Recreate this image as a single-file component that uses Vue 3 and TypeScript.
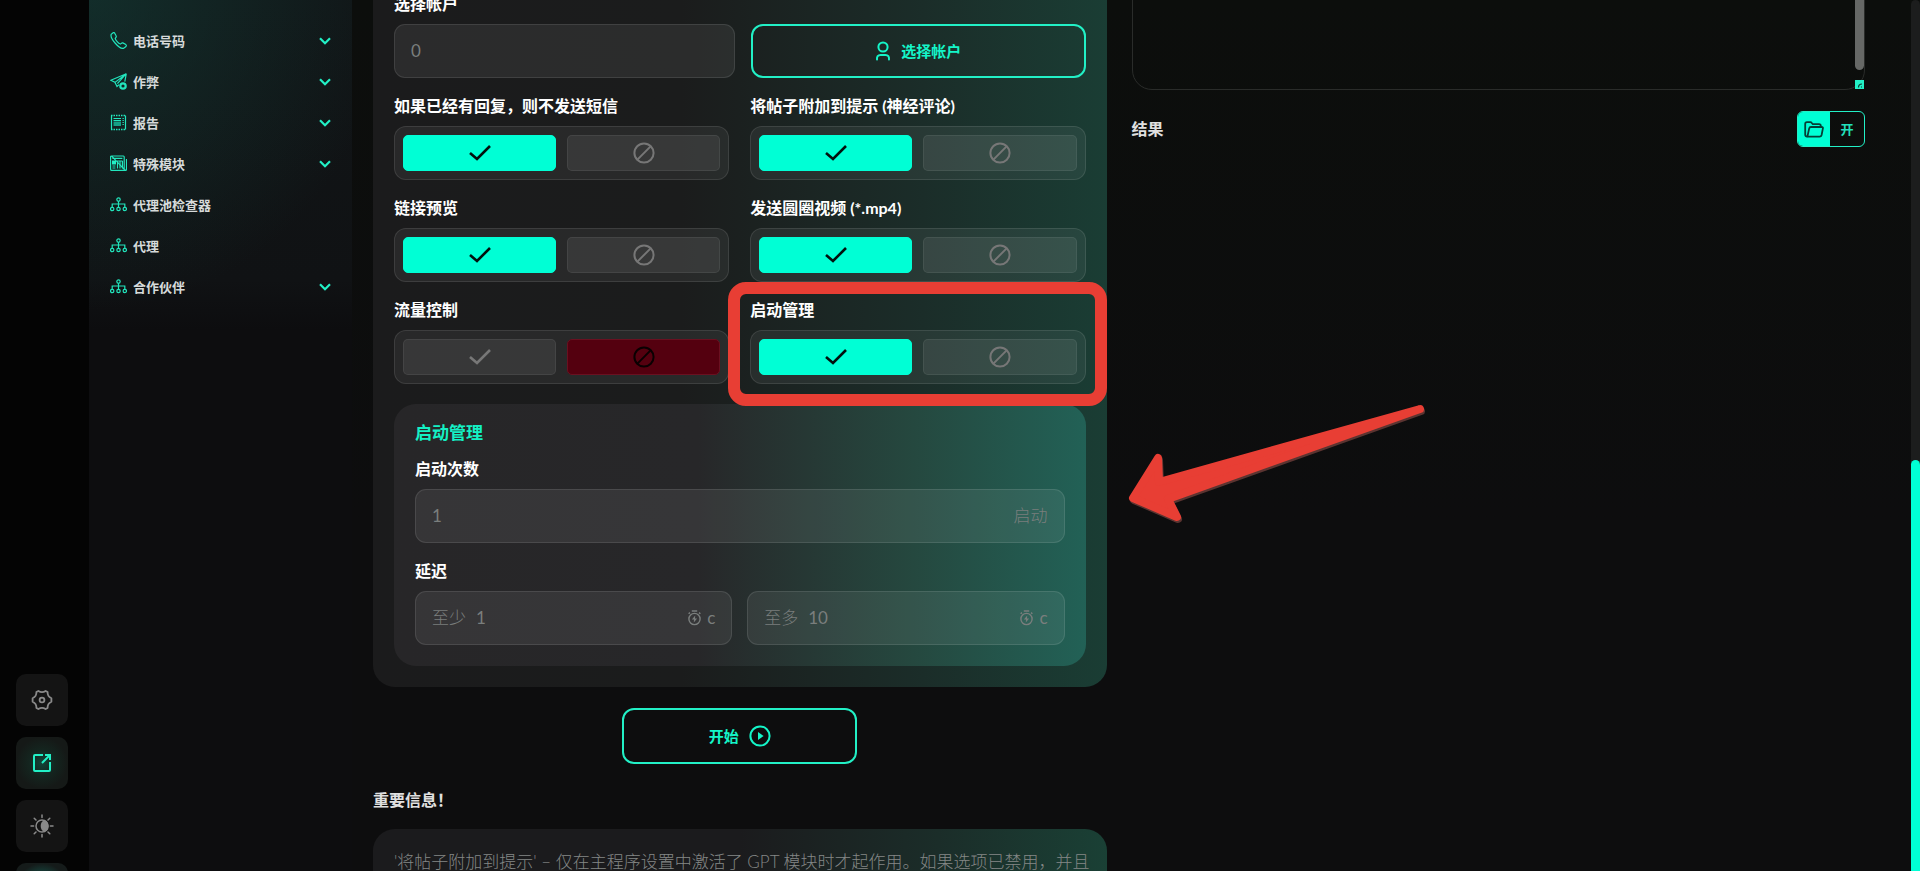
<script setup lang="ts">
import { reactive, ref } from 'vue'

interface NavItem {
  label: string
  icon: 'phone' | 'plane' | 'report' | 'news' | 'tree'
  expandable: boolean
}

interface ToggleItem {
  id: string
  label: string
  marked?: boolean
}

const navItems: NavItem[] = [
  { label: '电话号码', icon: 'phone', expandable: true },
  { label: '作弊', icon: 'plane', expandable: true },
  { label: '报告', icon: 'report', expandable: true },
  { label: '特殊模块', icon: 'news', expandable: true },
  { label: '代理池检查器', icon: 'tree', expandable: false },
  { label: '代理', icon: 'tree', expandable: false },
  { label: '合作伙伴', icon: 'tree', expandable: true },
]

const toggles: ToggleItem[] = [
  { id: 'skip-replied', label: '如果已经有回复，则不发送短信' },
  { id: 'attach-post', label: '将帖子附加到提示 (神经评论)' },
  { id: 'link-preview', label: '链接预览' },
  { id: 'round-video', label: '发送圆圈视频 (*.mp4)' },
  { id: 'flow-control', label: '流量控制' },
  { id: 'launch-control', label: '启动管理', marked: true },
]

const state = reactive<Record<string, boolean>>({
  'skip-replied': true,
  'attach-post': true,
  'link-preview': true,
  'round-video': true,
  'flow-control': false,
  'launch-control': true,
})

const log = ref('')
</script>

<template>
  <div class="page">
    <aside class="rail">
      <button class="rail-btn" type="button" aria-label="设置">
        <svg width="22" height="22" viewBox="0 0 22 22" fill="none" stroke="#8a8a8a" stroke-width="1.8" stroke-linejoin="round">
          <path d="M7.4 1.9 Q11 4.2 14.6 1.9 L16.6 3.1 Q16.4 7.4 20.4 9.2 V12.8 Q16.4 14.6 16.6 18.9 L14.6 20.1 Q11 17.8 7.4 20.1 L5.4 18.9 Q5.6 14.6 1.6 12.8 V9.2 Q5.6 7.4 5.4 3.1 Z" />
          <circle cx="11" cy="11" r="2.4" />
        </svg>
      </button>
      <button class="rail-btn rail-btn-active" type="button" aria-label="打开">
        <svg width="20" height="20" viewBox="0 0 20 20" fill="none" stroke="#22f0c6" stroke-width="2">
          <path d="M11 2 H3 Q2 2 2 3 V17 Q2 18 3 18 H17 Q18 18 18 17 V9" />
          <path d="M10 10 L17 3 M13 2 H18 V7" />
        </svg>
      </button>
      <button class="rail-btn" type="button" aria-label="主题">
        <svg width="24" height="24" viewBox="0 0 24 24" fill="none" stroke="#8a8a8a" stroke-width="1.5" stroke-linecap="round">
          <circle cx="12" cy="12" r="6" />
          <path d="M14.4 6.6 A6 6 0 0 1 14.4 17.4 A6.4 6.4 0 0 1 14.4 6.6 Z" fill="#8a8a8a" />
          <path d="M12 1 V3.6 M12 20.4 V23 M1 12 H3.6 M20.4 12 H23 M4.2 4.2 L6 6 M18 18 L19.8 19.8 M19.8 4.2 L18 6 M6 18 L4.2 19.8" />
        </svg>
      </button>
      <button class="rail-btn rail-btn-tinted" type="button" aria-label="更多"></button>
    </aside>

    <nav class="sidebar">
      <a v-for="item in navItems" :key="item.label" class="nav-item" href="#">
        <svg v-if="item.icon === 'phone'" class="nav-icon" viewBox="0 0 17 17">
          <path d="M3.1 .8 L1.2 2.3 C-.2 6.2 8.8 16.9 13.4 16.4 L16 14.5 Q16.8 13.5 15.8 12.6 L12.8 10.9 Q12 10.6 11.4 11.4 L10.4 12 C8.2 11.2 5.7 8.2 5.2 6.3 L6.1 5.2 Q6.5 4.5 6.1 3.8 L4.7 1.2 Q4 .2 3.1 .8 Z" />
        </svg>
        <svg v-else-if="item.icon === 'plane'" class="nav-icon" viewBox="0 0 17 17">
          <path d="M16.3 .7 L.8 7.3 L5 9.4 L16.3 .7 L7.4 10.6 M5 9.4 L7 13.6 L9 11.6 M16.3 .7 L14.8 8.6" />
          <circle cx="13" cy="13" r="2.7" stroke-width="2.2" />
        </svg>
        <svg v-else-if="item.icon === 'report'" class="nav-icon" viewBox="0 0 17 17">
          <path d="M1.5 1.5 V15.5 M15.5 15.5 V1.5" />
          <path d="M1 1.5 H16 M1 15.5 H16" stroke-dasharray="1.5 1" stroke-width="1.6" />
          <path d="M3.5 4.5 H11 M12.5 4.5 H13.8 M3.5 6.5 H11 M12.5 6.5 H13.8 M12.5 8.5 H13.8 M12.5 10.5 H13.8" />
          <path d="M3.5 7.5 H11 V12 H3.5 Z" fill="#159f85" stroke="none" />
        </svg>
        <svg v-else-if="item.icon === 'news'" class="nav-icon" viewBox="0 0 17 17">
          <path d="M1.6 1 H13.4 Q14.2 1 14.2 2 V14 Q14.2 15.4 15.3 15.4 Q16.5 15.4 16.5 14 V4 M15.3 15.4 H1.6 Q.6 15.4 .6 14 V2 Q.6 1 1.6 1 Z" />
          <path d="M2.4 3.4 H12.4 M7 6 H12.6 M2.4 11 H5.5 M2.4 13 H5.5 M7.5 6 V13.5 M10 6 V13.5 M12.4 6 V13.5" />
          <path d="M2 5.5 H6 V9.5 H2 Z" fill="#22f0c6" stroke="none" />
        </svg>
        <svg v-else class="nav-icon" viewBox="0 0 17 17">
          <circle cx="8.5" cy="3.6" r="1.7" />
          <circle cx="2.2" cy="13" r="1.7" />
          <circle cx="8.5" cy="13" r="1.7" />
          <circle cx="14.8" cy="13" r="1.7" />
          <path d="M8.5 5.3 V11.3 M2.2 11.3 V8 H14.8 V11.3" />
        </svg>
        <span>{{ item.label }}</span>
        <svg v-if="item.expandable" class="chevron" width="12" height="8" viewBox="0 0 12 8">
          <path d="M1 1.2 L6 6.2 L11 1.2" fill="none" stroke="#22f0c6" stroke-width="2.2" />
        </svg>
      </a>
    </nav>

    <main class="content">
      <section class="left-col">
        <div class="card">
          <div class="account-row">
            <div class="field">
              <label class="label" for="account">选择帐户</label>
              <div class="input-box">
                <input id="account" type="text" value="0" />
              </div>
            </div>
            <button class="outline-btn" type="button">
              <svg width="16" height="20" viewBox="0 0 16 20" fill="none" stroke="currentColor" stroke-width="2" stroke-linecap="round">
                <circle cx="8" cy="6" r="4.6" />
                <path d="M2 18.5 Q1.6 14 5.5 14 H10.5 Q14.4 14 14 18.5" />
              </svg>
              <span>选择帐户</span>
            </button>
          </div>

          <div class="toggle-grid">
            <div v-for="item in toggles" :key="item.id" class="field" :class="{ marked: item.marked }">
              <span :id="item.id" class="label">{{ item.label }}</span>
              <div class="toggle" role="group" :aria-labelledby="item.id">
                <button
                  class="option"
                  :class="{ on: state[item.id] }"
                  type="button"
                  aria-label="开"
                  :aria-pressed="state[item.id]"
                  @click="state[item.id] = true"
                >
                  <svg width="22" height="16" viewBox="0 0 22 16">
                    <path d="M1 8 L8 14 L21 1" fill="none" stroke="currentColor" stroke-width="2.6" />
                  </svg>
                </button>
                <button
                  class="option"
                  :class="{ off: !state[item.id] }"
                  type="button"
                  aria-label="关"
                  :aria-pressed="!state[item.id]"
                  @click="state[item.id] = false"
                >
                  <svg width="22" height="22" viewBox="0 0 22 22" fill="none" stroke="currentColor" stroke-width="2">
                    <circle cx="11" cy="11" r="9.6" />
                    <path d="M4.4 17.6 L17.6 4.4" />
                  </svg>
                </button>
              </div>
            </div>
          </div>

          <div class="panel">
            <h3 class="panel-title">启动管理</h3>
            <div class="field">
              <label class="label" for="launches">启动次数</label>
              <div class="input-box">
                <input id="launches" type="text" value="1" />
                <span class="unit">启动</span>
              </div>
            </div>
            <div class="field">
              <span id="delay" class="label">延迟</span>
              <div class="pair" role="group" aria-labelledby="delay">
                <div class="input-box">
                  <label class="unit" for="delay-min">至少</label>
                  <input id="delay-min" type="text" value="1" />
                  <svg class="timer" width="13" height="16" viewBox="0 0 13 16">
                    <circle cx="6.5" cy="9" r="5.6" fill="none" stroke="currentColor" stroke-width="1.4" />
                    <path d="M3.8 1 H9.2 M.6 3.8 L2 2.6 M12.4 3.8 L11 2.6" stroke="currentColor" stroke-width="1.4" />
                    <path d="M7.2 5.4 L3.9 9.6 H6 L5.8 12.6 L9.1 8.4 H7 Z" fill="currentColor" />
                  </svg>
                  <span>c</span>
                </div>
                <div class="input-box">
                  <label class="unit" for="delay-max">至多</label>
                  <input id="delay-max" type="text" value="10" />
                  <svg class="timer" width="13" height="16" viewBox="0 0 13 16">
                    <circle cx="6.5" cy="9" r="5.6" fill="none" stroke="currentColor" stroke-width="1.4" />
                    <path d="M3.8 1 H9.2 M.6 3.8 L2 2.6 M12.4 3.8 L11 2.6" stroke="currentColor" stroke-width="1.4" />
                    <path d="M7.2 5.4 L3.9 9.6 H6 L5.8 12.6 L9.1 8.4 H7 Z" fill="currentColor" />
                  </svg>
                  <span>c</span>
                </div>
              </div>
            </div>
          </div>
        </div>

        <button class="outline-btn start-btn" type="button">
          <span>开始</span>
          <svg width="22" height="22" viewBox="0 0 22 22">
            <circle cx="11" cy="11" r="9.6" fill="none" stroke="currentColor" stroke-width="2" />
            <path d="M9 7 L14.6 11 L9 15 Z" fill="currentColor" />
          </svg>
        </button>

        <h2 class="heading note-heading">重要信息！</h2>
        <div class="note">
          <p>'将帖子附加到提示' – 仅在主程序设置中激活了 GPT 模块时才起作用。如果选项已禁用，并且</p>
        </div>
      </section>

      <section class="right-col">
        <div class="log">
          <textarea v-model="log" aria-label="日志" readonly></textarea>
          <span class="log-thumb"></span>
          <svg class="log-grip" width="9" height="9" viewBox="0 0 9 9">
            <rect width="9" height="9" fill="#22f0c6" />
            <path d="M3.5 7.5 Q3.5 4 7 4 M6 7 H7" fill="none" stroke="#0b3b33" stroke-width="1.2" />
          </svg>
        </div>
        <div class="result-row">
          <h2 class="heading">结果</h2>
          <div class="result-actions">
            <button class="folder-btn" type="button" aria-label="文件夹">
              <svg width="20" height="17" viewBox="0 0 20 17" fill="none" stroke="#053f35" stroke-width="1.8" stroke-linejoin="round">
                <path d="M3.4 15.6 Q1.2 15.4 1.2 13.4 V3 Q1.2 1.2 3 1.2 H6.4 Q7.2 1.2 7.8 2 L8.8 3.2 H15 Q16.8 3.2 16.8 5" />
                <path d="M3.4 15.6 L5.2 7.4 Q5.5 6 7 6 H17.6 Q19.2 6 18.9 7.4 L17.6 14 Q17.2 15.6 15.6 15.6 Z" />
              </svg>
            </button>
            <button class="open-btn" type="button">开</button>
          </div>
        </div>
      </section>

      <svg class="arrow" width="304" height="124" viewBox="0 0 304 124">
        <g stroke-linejoin="round" stroke-width="8">
          <path d="M8 98 L33 58 L34 82 L295 9 L43 99 L52 117 Z" transform="translate(1 2)" fill="#5b3431" stroke="#5b3431" />
          <path d="M8 98 L33 58 L34 82 L295 9 L43 99 L52 117 Z" fill="#e83e34" stroke="#e83e34" />
        </g>
      </svg>
    </main>

    <div class="scrollbar"><div class="scroll-thumb"></div></div>
  </div>
</template>

<style>
body {
  margin: 0;
  background: #0d0d0e;
}
</style>

<style scoped>
* {
  box-sizing: border-box;
}

.page {
  display: flex;
  height: 100vh;
  overflow: hidden;
  background: linear-gradient(180deg, #0c0e0c, #0d0d0e 60%);
  color: #fff;
  font-family: Lato, "Noto Sans CJK SC", sans-serif;
  font-size: 16px;
  line-height: 24px;
}

button,
input,
textarea {
  margin: 0;
  font: inherit;
}

button {
  padding: 0;
  cursor: pointer;
}

h2,
h3,
p {
  margin: 0;
}

.rail {
  display: flex;
  flex: none;
  flex-direction: column;
  align-items: center;
  justify-content: flex-end;
  gap: 11px;
  width: 89px;
  margin-bottom: -44px;
  padding-right: 5px;
  background: #040404;
}

.rail-btn {
  display: flex;
  flex: none;
  align-items: center;
  justify-content: center;
  width: 52px;
  height: 52px;
  border: 0;
  border-radius: 10px;
  background: #141414;
}

.rail-btn-active {
  background: radial-gradient(circle, #124539 0, #14251f 35%, #151917 70%);
}

.rail-btn-tinted {
  background: radial-gradient(circle, #16796a, #151b1a 70%);
}

.sidebar {
  flex: none;
  width: 263px;
  padding: 20px 21px;
  background:
    radial-gradient(ellipse 300px 320px at 0 -10px, rgba(20, 70, 62, 0.5), rgba(20, 60, 56, 0)),
    linear-gradient(180deg, #111517, #101214 280px, #0d0d0f 330px);
}

.nav-item {
  display: flex;
  align-items: center;
  gap: 6px;
  height: 41px;
  color: #d6dada;
  font-size: 13px;
  font-weight: 700;
  text-decoration: none;
}

.nav-icon {
  width: 17px;
  height: 17px;
  fill: none;
  stroke: #22e6bd;
  stroke-width: 1.2;
}

.chevron {
  margin-left: auto;
}

.content {
  position: relative;
  display: grid;
  flex: 1;
  grid-template-columns: minmax(0, 1fr) minmax(0, 1fr);
  align-items: start;
  gap: 25px;
  min-width: 0;
  margin-top: -29px;
  padding: 0 46px 0 21px;
}

.card {
  padding: 21px;
  border-radius: 22px;
  background: linear-gradient(90deg, #1b1b1c 0%, #1b1c1c 42%, #1b2d29 75%, #1a3d34 100%);
}

.account-row {
  display: grid;
  grid-template-columns: 341fr 334fr;
  align-items: end;
  gap: 16px;
}

.field {
  display: flex;
  flex-direction: column;
  gap: 8px;
}

.label {
  font-weight: 700;
}

.input-box {
  display: flex;
  align-items: center;
  gap: 10px;
  height: 54px;
  padding: 0 16px;
  border: 1px solid rgba(255, 255, 255, 0.1);
  border-radius: 11px;
  background: rgba(255, 255, 255, 0.07);
  color: #7a7e7d;
  font-size: 17px;
}

.input-box input {
  flex: 1;
  width: 0;
  min-width: 0;
  padding: 0;
  border: 0;
  outline: 0;
  background: none;
  color: inherit;
}

.unit {
  font-weight: 300;
}

.timer {
  margin-right: -4px;
}

.outline-btn {
  display: flex;
  align-items: center;
  justify-content: center;
  gap: 10px;
  height: 54px;
  border: 2px solid #22f0c6;
  border-radius: 12px;
  background: transparent;
  color: #14f5c8;
  font-size: 15px;
  font-weight: 700;
}

.toggle-grid {
  display: grid;
  grid-template-columns: 1fr 1fr;
  gap: 16px 21px;
  margin-top: 16px;
}

.toggle {
  display: grid;
  grid-template-columns: 1fr 1fr;
  gap: 11px;
  padding: 8px;
  border: 1px solid rgba(255, 255, 255, 0.1);
  border-radius: 12px;
  background: rgba(255, 255, 255, 0.06);
}

.option {
  display: flex;
  align-items: center;
  justify-content: center;
  height: 36px;
  border: 1px solid rgba(255, 255, 255, 0.07);
  border-radius: 5px;
  background: rgba(255, 255, 255, 0.07);
  color: #777;
}

.option.on {
  border-color: #00ffd5;
  background: #00ffd5;
  color: #02110e;
}

.option.off {
  border-color: #6a1020;
  background: #54000f;
  color: #0a0002;
}

.marked {
  position: relative;
  z-index: 1;
}

.marked::after {
  position: absolute;
  inset: -16px -21px -22px -22px;
  border: 12px solid #e83e34;
  border-radius: 18px;
  content: "";
  pointer-events: none;
}

.panel {
  display: flex;
  flex-direction: column;
  gap: 16px;
  margin-top: 20px;
  padding: 17px 21px 21px;
  border-radius: 22px;
  background: linear-gradient(90deg, #272628 0%, #272729 44%, #25483f 75%, #226156 100%);
}

.panel-title {
  margin-bottom: -4px;
  color: #14f0c4;
  font-size: 17px;
  font-weight: 700;
}

.pair {
  display: grid;
  grid-template-columns: 1fr 1fr;
  gap: 15px;
}

.start-btn {
  width: 32%;
  height: 56px;
  margin: 21px auto 0;
}

.heading {
  color: #e0e0e0;
  font-size: 16px;
  font-weight: 700;
}

.note-heading {
  margin-top: 24px;
}

.note {
  margin-top: 17px;
  padding: 21px;
  border-radius: 22px;
  background: linear-gradient(90deg, #1b1b1d 0%, #1b1b1d 50%, #1b2d29 77%, #1a4035 100%);
  color: #848786;
  font-size: 17px;
  font-weight: 300;
  white-space: nowrap;
}

.log {
  position: relative;
  height: 119px;
  border: 1px solid #2a2c2a;
  border-radius: 20px;
}

.log textarea {
  display: block;
  width: 100%;
  height: 100%;
  padding: 16px;
  border: 0;
  outline: 0;
  background: transparent;
  color: #ccc;
  resize: none;
}

.log-thumb {
  position: absolute;
  top: 0;
  right: 0;
  bottom: 19px;
  width: 9px;
  border-radius: 5px;
  background: #666866;
}

.log-grip {
  position: absolute;
  right: 0;
  bottom: 0;
}

.result-row {
  display: flex;
  align-items: center;
  justify-content: space-between;
  margin-top: 21px;
}

.result-actions {
  display: flex;
  height: 36px;
  overflow: hidden;
  border: 1px solid #22f0c6;
  border-radius: 6px;
}

.folder-btn,
.open-btn {
  display: flex;
  align-items: center;
  justify-content: center;
  width: 32px;
  border: 0;
  background: #00ffd5;
}

.open-btn {
  width: 34px;
  background: transparent;
  color: #22e0bc;
  font-size: 13px;
  font-weight: 700;
}

.arrow {
  position: absolute;
  top: 429px;
  left: 49.6%;
  pointer-events: none;
}

.scrollbar {
  display: flex;
  flex: none;
  align-items: flex-end;
  width: 9px;
  border-radius: 5px;
  background: #1c1d1d;
}

.scroll-thumb {
  width: 100%;
  height: 47.2%;
  border-radius: 5px 5px 0 0;
  background: #00ffd5;
}
</style>
